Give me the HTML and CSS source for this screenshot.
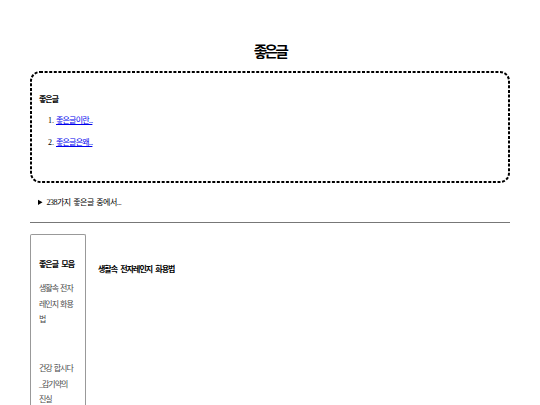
FILE: index.html
```html
<!DOCTYPE html>
<html lang="ko">
<head>
<meta charset="utf-8">
<link rel="stylesheet" href="styles.css">
</head>
<body>
<div class="page">
  <h1 class="title">좋은글</h1>
  <div class="toc">
    <h2 class="toc-title">좋은글</h2>
    <ol class="toc-list">
      <li><a href="#">좋은글이란...</a></li>
      <li><a href="#">좋은글은왜...</a></li>
    </ol>
  </div>
  <details class="more">
    <summary>238가지 좋은글 중에서...</summary>
  </details>
  <hr class="rule">
  <div class="content">
    <aside class="side">
      <h3 class="side-title">좋은글 모음</h3>
      <p class="side-item">생활속 전자레인지 화용법</p>
      <p class="side-item">건강 합시다 <span class="word">_감기약의</span> <span class="word">진실</span></p>
    </aside>
    <main class="main">
      <h3 class="main-title">생활속 전자레인지 화용법</h3>
    </main>
  </div>
</div>
</body>
</html>
```
FILE: styles.css
```css
html, body {
  margin: 0;
  padding: 0;
  background: #fff;
}
body {
  font-family: "Liberation Serif", "Noto Sans CJK KR", serif;
  font-size: 8px;
  color: #000;
}
.page {
  width: 480px;
  margin: 0 auto;
  padding-top: 40px;
}
.title {
  margin: 0;
  text-align: center;
  font-family: "Noto Sans CJK KR", sans-serif;
  font-size: 14.5px;
  letter-spacing: -2.5px;
  line-height: 22px;
  font-weight: bold;
}
.toc {
  margin-top: 9px;
  height: 112px;
  padding: 21px 9px 0;
  box-sizing: border-box;
  background-image: url("data:image/svg+xml,%3Csvg xmlns='http://www.w3.org/2000/svg' width='480' height='112'%3E%3Crect x='1' y='1' width='478' height='110' rx='9' ry='9' fill='none' stroke='%23000' stroke-width='2' stroke-dasharray='3 1.6'/%3E%3C/svg%3E");
  background-repeat: no-repeat;
}
.toc-title {
  margin: 0;
  font-family: "Noto Sans CJK KR", sans-serif;
  font-size: 8px;
  letter-spacing: -1px;
  line-height: 14px;
  font-weight: bold;
}
.toc-list {
  margin: 0;
  padding-left: 17px;
  font-size: 8px;
}
.toc-list li {
  margin-top: 8px;
  line-height: 14px;
}
.toc-list a {
  color: #00e;
  text-decoration: underline;
  letter-spacing: -0.8px;
}
.more {
  margin-top: 13px;
  padding-left: 8px;
  font-size: 8px;
  line-height: 14px;
  letter-spacing: -0.5px;
  word-spacing: 1px;
}
.more summary {
  cursor: pointer;
}
.rule {
  margin: 12px 0 0;
  border: 0;
  border-top: 1px solid #777;
}
.content {
  display: flex;
  gap: 12px;
  margin-top: 11px;
}
.side {
  flex: none;
  width: 56px;
  box-sizing: border-box;
  border: 1px solid #999;
  border-bottom: 0;
  border-radius: 2px 2px 0 0;
  padding: 22px 9px 0 8px;
  height: 171px;
  overflow: hidden;
}
.side-title {
  margin: 0;
  font-family: "Noto Sans CJK KR", sans-serif;
  font-size: 8px;
  letter-spacing: -1px;
  word-spacing: 2px;
  line-height: 14px;
  font-weight: bold;
  white-space: nowrap;
}
.side-item {
  margin: 10px 0 0;
  font-size: 8px;
  letter-spacing: -1px;
  word-spacing: 1px;
  line-height: 15.5px;
  color: #4a4a4a;
}
.side-item + .side-item {
  margin-top: 33.5px;
}
.word {
  white-space: nowrap;
}
.main-title {
  margin: 28px 0 0;
  font-family: "Noto Sans CJK KR", sans-serif;
  font-size: 8px;
  letter-spacing: -1px;
  word-spacing: 2px;
  line-height: 14px;
  font-weight: bold;
}
```
